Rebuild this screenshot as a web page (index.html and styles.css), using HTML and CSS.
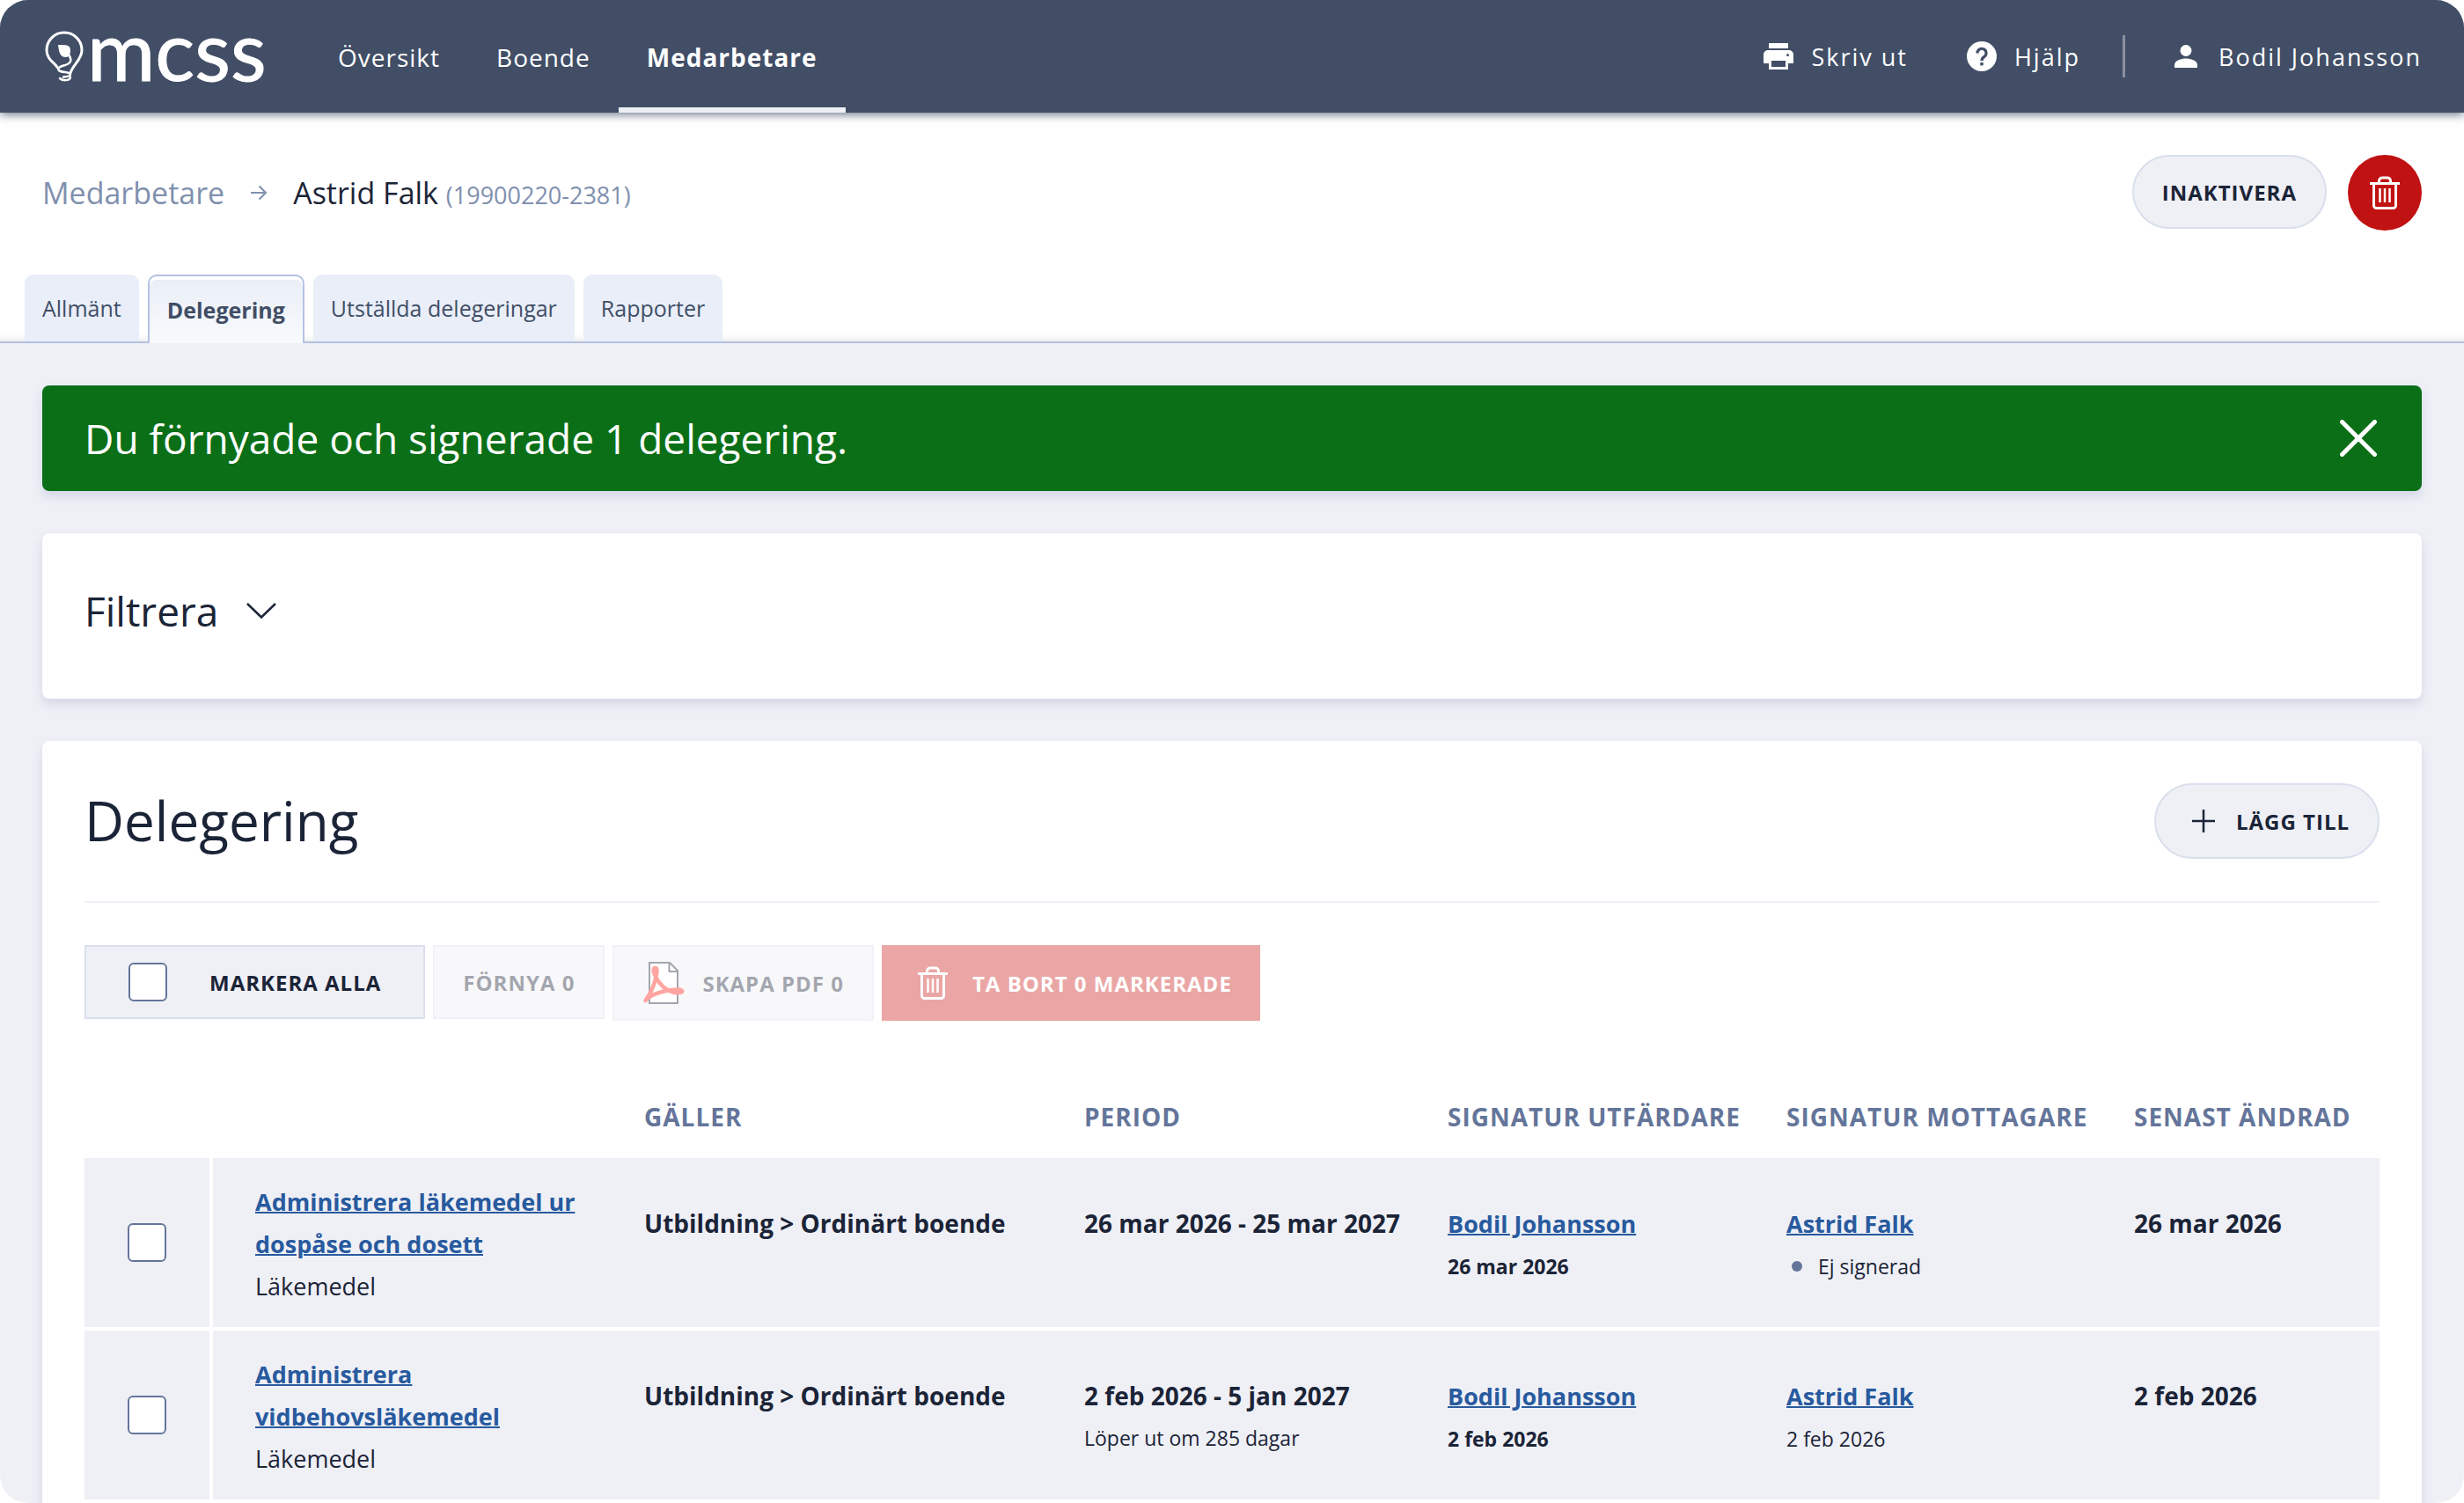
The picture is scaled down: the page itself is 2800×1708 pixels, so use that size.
FILE: index.html
```html
<!DOCTYPE html>
<html lang="sv">

<head>
    <meta charset="UTF-8">
    <meta name="viewport" content="width=device-width, initial-scale=1.0">
    <title>MCSS - Delegering</title>
    <link rel="stylesheet" href="styles.css">
</head>

<body>
    <!-- shared icons -->
    <svg class="sprite" aria-hidden="true">
        <symbol id="icon-trash" viewBox="0 0 34 38">
            <g fill="none" stroke="currentColor" stroke-width="3">
                <path d="M0 8.500h34" />
                <path d="M10.500 8V5.500a3.500 3.500 0 0 1 3.500-3.500h6a3.500 3.500 0 0 1 3.500 3.500V8" />
                <path d="M4.500 8.500v25a3 3 0 0 0 3 3h19a3 3 0 0 0 3-3v-25" />
                <path d="M11.500 14v16M17 14v16M22.500 14v16" stroke-width="2.500" />
            </g>
        </symbol>
    </svg>

    <div class="page">
        <header class="topbar">
            <a class="logo" href="#">
                <svg class="logo-bulb" viewBox="0 0 44 58" aria-hidden="true">
                    <g fill="none" stroke="#fff" stroke-width="3" stroke-linecap="round">
                        <path d="M14 41.500C12 37 2 33 2 22a20 20 0 0 1 40 0c0 11-10 16-13 26" />
                        <path d="M27 27c4 6 3 10-4 12-7 1.500-9 4-7 6 3 3 13 1 13 5 0 2-4 2-8 2.500" stroke-width="2.500" />
                        <path d="M17 54c3 3 11 3 12-1" stroke-width="2.500" />
                    </g>
                    <path d="M15 16c7 0 14-1 14 6 0 4-1 8-5 8-7 0-8-6-9-14z" fill="#fff" />
                </svg>
                <span class="logo-text">mcss</span>
            </a>
            <nav class="main-nav">
                <a href="#">Översikt</a>
                <a href="#">Boende</a>
                <a class="active" href="#">Medarbetare</a>
            </nav>
            <div class="tools">
                <a class="tool" href="#">
                    <svg width="34" height="30" viewBox="0 0 34 30" aria-hidden="true">
                        <path d="M6 0h22v6H6z" fill="#fff" />
                        <path fill-rule="evenodd" fill="#fff" d="M5 8h24a5 5 0 0 1 5 5v10h-6v7H6v-7H0V13a5 5 0 0 1 5-5zm4 12v7h16v-7zm18.500-8a1.500 1.500 0 1 0 0 3 1.500 1.500 0 0 0 0-3z" />
                    </svg>
                    <span>Skriv ut</span>
                </a>
                <a class="tool" href="#">
                    <svg width="34" height="34" viewBox="0 0 34 34" aria-hidden="true">
                        <circle cx="17" cy="17" r="17" fill="#fff" />
                        <path d="M12 13.500a5 5 0 1 1 8 3.800c-2 1.500-3 2.200-3 4.700" fill="none" stroke="#414e66" stroke-width="3.200" />
                        <path d="M15.300 24h3.400v3.400h-3.400z" fill="#414e66" />
                    </svg>
                    <span>Hjälp</span>
                </a>
                <span class="tool-divider"></span>
                <a class="tool user" href="#">
                    <svg width="26" height="26" viewBox="0 0 26 26" aria-hidden="true">
                        <circle cx="13" cy="6.500" r="6.500" fill="#fff" />
                        <path d="M0 26v-3.500C0 18 8 15.500 13 15.500S26 18 26 22.500V26z" fill="#fff" />
                    </svg>
                    <span>Bodil Johansson</span>
                </a>
            </div>
        </header>

        <section class="page-head">
            <div class="title-row">
                <div class="breadcrumb">
                    <a href="#">Medarbetare</a>
                    <svg width="18" height="18" viewBox="0 0 18 18" aria-hidden="true">
                        <path d="M0 9h17M9.500 1.500 17 9l-7.500 7.500" fill="none" stroke="currentColor" stroke-width="2" />
                    </svg>
                    <h1>Astrid Falk <small>(19900220-2381)</small></h1>
                </div>
                <div class="title-actions">
                    <button class="btn btn-round" type="button">INAKTIVERA</button>
                    <button class="btn-delete" type="button" aria-label="Ta bort">
                        <svg width="34" height="38"><use href="#icon-trash" /></svg>
                    </button>
                </div>
            </div>
            <nav class="tabs">
                <a href="#">Allmänt</a>
                <a class="active" href="#">Delegering</a>
                <a href="#">Utställda delegeringar</a>
                <a href="#">Rapporter</a>
            </nav>
        </section>

        <main class="content">
            <div class="alert" role="status">
                <span>Du förnyade och signerade 1 delegering.</span>
                <button class="alert-close" type="button" aria-label="Stäng">
                    <svg width="42" height="42" viewBox="0 0 42 42" aria-hidden="true">
                        <path d="M2.500 2.500l37 37M39.500 2.500l-37 37" stroke="#fff" stroke-width="5" stroke-linecap="round" />
                    </svg>
                </button>
            </div>

            <section class="card filter">
                <button class="filter-toggle" type="button">
                    <span>Filtrera</span>
                    <svg width="34" height="18" viewBox="0 0 34 18" aria-hidden="true">
                        <path d="M1 1l16 15.500L33 1" fill="none" stroke="currentColor" stroke-width="2.500" />
                    </svg>
                </button>
            </section>

            <section class="card">
                <div class="card-head">
                    <h2>Delegering</h2>
                    <button class="btn btn-round btn-add" type="button">
                        <svg width="26" height="26" viewBox="0 0 26 26" aria-hidden="true">
                            <path d="M0 13h26M13 0v26" stroke="currentColor" stroke-width="2.500" />
                        </svg>
                        <span>LÄGG TILL</span>
                    </button>
                </div>

                <div class="toolbar">
                    <label class="btn select-all">
                        <input type="checkbox">
                        <span>MARKERA ALLA</span>
                    </label>
                    <button class="btn" type="button" disabled>FÖRNYA 0</button>
                    <button class="btn btn-pdf" type="button" disabled>
                        <svg width="48" height="48" viewBox="0 0 48 48" aria-hidden="true">
                            <path d="M8 1h23l9 9v37H8z" fill="#fff" stroke="#1b2437" stroke-width="2" />
                            <path d="M30.500 1v10H40" fill="none" stroke="#1b2437" stroke-width="2" />
                            <path d="M3.500 44c5-7 10-17 12-27 1.500-7 1.500-10-1-10s-2.500 4 0 9c5 10 13 17 22 19 10 1.500 11-3 5-3.500C28 31.500 10 36 3.500 44z" fill="none" stroke="#ff2116" stroke-width="4.500" stroke-linejoin="round" />
                        </svg>
                        <span>SKAPA PDF 0</span>
                    </button>
                    <button class="btn btn-danger" type="button" disabled>
                        <svg width="34" height="38"><use href="#icon-trash" /></svg>
                        <span>TA BORT 0 MARKERADE</span>
                    </button>
                </div>

                <table class="delegations">
                    <colgroup>
                        <col class="col-check">
                        <col>
                        <col class="col-scope">
                        <col class="col-period">
                        <col class="col-issuer">
                        <col class="col-receiver">
                        <col class="col-changed">
                    </colgroup>
                    <thead>
                        <tr>
                            <th></th>
                            <th></th>
                            <th>GÄLLER</th>
                            <th>PERIOD</th>
                            <th>SIGNATUR UTFÄRDARE</th>
                            <th>SIGNATUR MOTTAGARE</th>
                            <th>SENAST ÄNDRAD</th>
                        </tr>
                    </thead>
                    <tbody>
                        <tr>
                            <td class="check"><input type="checkbox" aria-label="Markera Administrera läkemedel ur dospåse och dosett"></td>
                            <td class="name">
                                <a href="#">Administrera läkemedel ur dospåse och dosett</a>
                                <div>Läkemedel</div>
                            </td>
                            <td><strong>Utbildning &gt; Ordinärt boende</strong></td>
                            <td><strong>26 mar 2026 - 25 mar 2027</strong></td>
                            <td><a href="#">Bodil Johansson</a><div class="sub"><b>26 mar 2026</b></div></td>
                            <td><a href="#">Astrid Falk</a><div class="sub unsigned">Ej signerad</div></td>
                            <td><strong>26 mar 2026</strong></td>
                        </tr>
                        <tr>
                            <td class="check"><input type="checkbox" aria-label="Markera Administrera vidbehovsläkemedel"></td>
                            <td class="name">
                                <a href="#">Administrera vidbehovsläkemedel</a>
                                <div>Läkemedel</div>
                            </td>
                            <td><strong>Utbildning &gt; Ordinärt boende</strong></td>
                            <td><strong>2 feb 2026 - 5 jan 2027</strong><div class="sub">Löper ut om 285 dagar</div></td>
                            <td><a href="#">Bodil Johansson</a><div class="sub"><b>2 feb 2026</b></div></td>
                            <td><a href="#">Astrid Falk</a><div class="sub">2 feb 2026</div></td>
                            <td><strong>2 feb 2026</strong></td>
                        </tr>
                    </tbody>
                </table>
            </section>
        </main>
    </div>
</body>

</html>
```

FILE: styles.css
```css
* {
    box-sizing: border-box;
}

body {
    margin: 0;
    background: #fff;
    color: #1b2437;
    font-family: "Open Sans", "Noto Sans", sans-serif;
    font-size: 28px;
}

a {
    color: inherit;
    text-decoration: none;
}

button {
    font-family: inherit;
    color: inherit;
    cursor: pointer;
}

h1,
h2 {
    margin: 0;
    font-weight: 400;
}

svg {
    display: block;
    flex: none;
}

.sprite {
    position: absolute;
    width: 0;
    height: 0;
}

.page {
    display: flex;
    flex-direction: column;
    height: 100vh;
    overflow: hidden;
    border-radius: 32px;
    background: #eff0f6;
}

/* top bar */
.topbar {
    position: relative;
    z-index: 1;
    flex: none;
    display: flex;
    height: 128px;
    padding: 0 48px;
    background: #414e66;
    color: #fff;
    letter-spacing: 1px;
    box-shadow: 0 2px 10px rgba(65, 78, 102, .8);
}

.logo {
    display: flex;
    align-items: center;
    gap: 4px;
    width: 304px;
    padding-left: 3px;
    letter-spacing: 0;
}

.logo-bulb {
    width: 44px;
    height: 58px;
}

.logo-text {
    font-family: Lato, sans-serif;
    font-size: 94px;
    line-height: 112px;
    padding-bottom: 16px;
    -webkit-text-stroke: 1px #fff;
}

.main-nav {
    display: flex;
}

.main-nav a {
    display: flex;
    align-items: center;
    padding: 8px 32px 0;
    border-bottom: 6px solid transparent;
}

.main-nav a.active {
    font-weight: 700;
    border-bottom-color: #eff0f6;
}

.tools {
    display: flex;
    align-items: center;
    margin-left: auto;
    font-size: 27px;
    letter-spacing: 2px;
}

.tool {
    display: flex;
    align-items: center;
    gap: 20px;
    margin-right: 67px;
}

.tool-divider {
    width: 3px;
    height: 48px;
    margin: 0 56px 0 -19px;
    background: #8b909f;
}

.tool.user {
    gap: 24px;
    margin-right: 0;
}

/* breadcrumb + tabs */
.page-head {
    flex: none;
    padding-top: 48px;
    background: #fff;
    border-bottom: 2px solid #b4c1e2;
    box-shadow: inset 0 -10px 8px -8px rgba(0, 0, 0, .1);
}

.title-row {
    display: flex;
    justify-content: space-between;
    padding: 0 48px;
}

.breadcrumb {
    display: flex;
    align-items: center;
    gap: 30px;
    font-size: 34px;
    color: #7f90ae;
}

.breadcrumb h1 {
    font-size: 34px;
    color: #1b2437;
}

.breadcrumb small {
    font-size: 27px;
    color: #7f90ae;
}

.title-actions {
    display: flex;
    align-items: flex-start;
    gap: 24px;
}

.btn {
    display: flex;
    align-items: center;
    height: 84px;
    padding: 0 32px;
    border: 2px solid #d9dfec;
    background: #eff0f6;
    font-size: 24px;
    font-weight: 700;
    letter-spacing: 1px;
    white-space: nowrap;
}

.btn:disabled {
    opacity: .4;
    cursor: default;
}

.btn-round {
    border-radius: 43px;
}

.btn-delete {
    display: flex;
    align-items: center;
    justify-content: center;
    width: 84px;
    height: 86px;
    padding: 0;
    border: none;
    border-radius: 50%;
    background: #c01212;
    color: #fff;
}

.tabs {
    display: flex;
    align-items: flex-start;
    gap: 10px;
    margin: 50px 28px -2px;
    font-size: 25px;
    color: #414e66;
}

.tabs a {
    height: 76px;
    padding: 0 20px;
    line-height: 76px;
    border-radius: 10px 10px 0 0;
    background: #e9eef9;
}

.tabs a.active {
    height: 78px;
    border: 2px solid #b4c1e2;
    border-bottom: none;
    background: linear-gradient(#e9eef7, #f8fafc);
    box-shadow: inset 0 4px #fff;
    font-weight: 700;
}

/* content */
.content {
    display: flex;
    flex-direction: column;
    gap: 48px;
    padding: 48px;
}

.alert,
.card {
    flex: none;
    border-radius: 8px;
    box-shadow: 0 6px 12px rgba(100, 115, 160, .2);
}

.alert {
    display: flex;
    align-items: center;
    justify-content: space-between;
    height: 120px;
    padding: 0 48px;
    background: #0b6f17;
    color: #fff;
    font-size: 46px;
}

.alert-close {
    padding: 0 3px;
    border: none;
    background: none;
}

.card {
    padding: 48px;
    background: #fff;
}

.filter {
    height: 188px;
}

.filter-toggle {
    display: flex;
    align-items: center;
    gap: 32px;
    padding: 0;
    border: none;
    background: none;
    font-size: 46px;
    line-height: 80px;
}

.card-head {
    display: flex;
    align-items: flex-start;
    justify-content: space-between;
    height: 136px;
    border-bottom: 2px solid #eff0f6;
}

.card-head h2 {
    font-size: 62px;
    line-height: 84px;
}

.btn-add {
    gap: 24px;
    height: 86px;
    padding-left: 41px;
}

.toolbar {
    display: flex;
    align-items: flex-start;
    gap: 9px;
    margin-top: 48px;
}

.select-all {
    gap: 48px;
    padding: 0 48px;
}

.btn-pdf,
.btn-danger {
    height: 86px;
}

.btn-pdf {
    gap: 20px;
}

.btn-danger {
    gap: 28px;
    padding-left: 41px;
    border: none;
    background: #cd2321;
    color: #fff;
}

input[type="checkbox"] {
    appearance: none;
    display: block;
    width: 44px;
    height: 44px;
    margin: 0;
    border: 2px solid #64759a;
    border-radius: 6px;
    background: #fff;
}

/* table */
.delegations {
    width: 100%;
    margin-top: 48px;
    table-layout: fixed;
    border-spacing: 0;
    line-height: 48px;
}

.col-check {
    width: 146px;
}

.col-scope {
    width: 500px;
}

.col-period {
    width: 413px;
}

.col-issuer {
    width: 385px;
}

.col-receiver {
    width: 395px;
}

.col-changed {
    width: 279px;
}

.delegations th {
    height: 108px;
    padding: 14px 0 0;
    color: #64759a;
    letter-spacing: 1px;
    text-align: left;
    white-space: nowrap;
}

.delegations td {
    height: 196px;
    padding: 50px 0 0;
    border-bottom: 4px solid #fff;
    background: #eff0f6;
    vertical-align: top;
    white-space: nowrap;
}

.delegations td.check {
    padding: 0 0 0 49px;
    border-right: 4px solid #fff;
    vertical-align: middle;
}

.delegations td.name {
    padding: 26px 48px 0 48px;
    font-size: 27px;
    white-space: normal;
}

.delegations a {
    color: #285a9e;
    font-size: 27px;
    font-weight: 700;
    text-decoration: underline;
    text-decoration-thickness: 2px;
}

.sub {
    font-size: 23px;
}

.unsigned {
    display: flex;
    align-items: center;
    gap: 18px;
    padding-left: 6px;
}

.unsigned::before {
    content: '';
    width: 12px;
    height: 12px;
    border-radius: 50%;
    background: #64759a;
}
```
